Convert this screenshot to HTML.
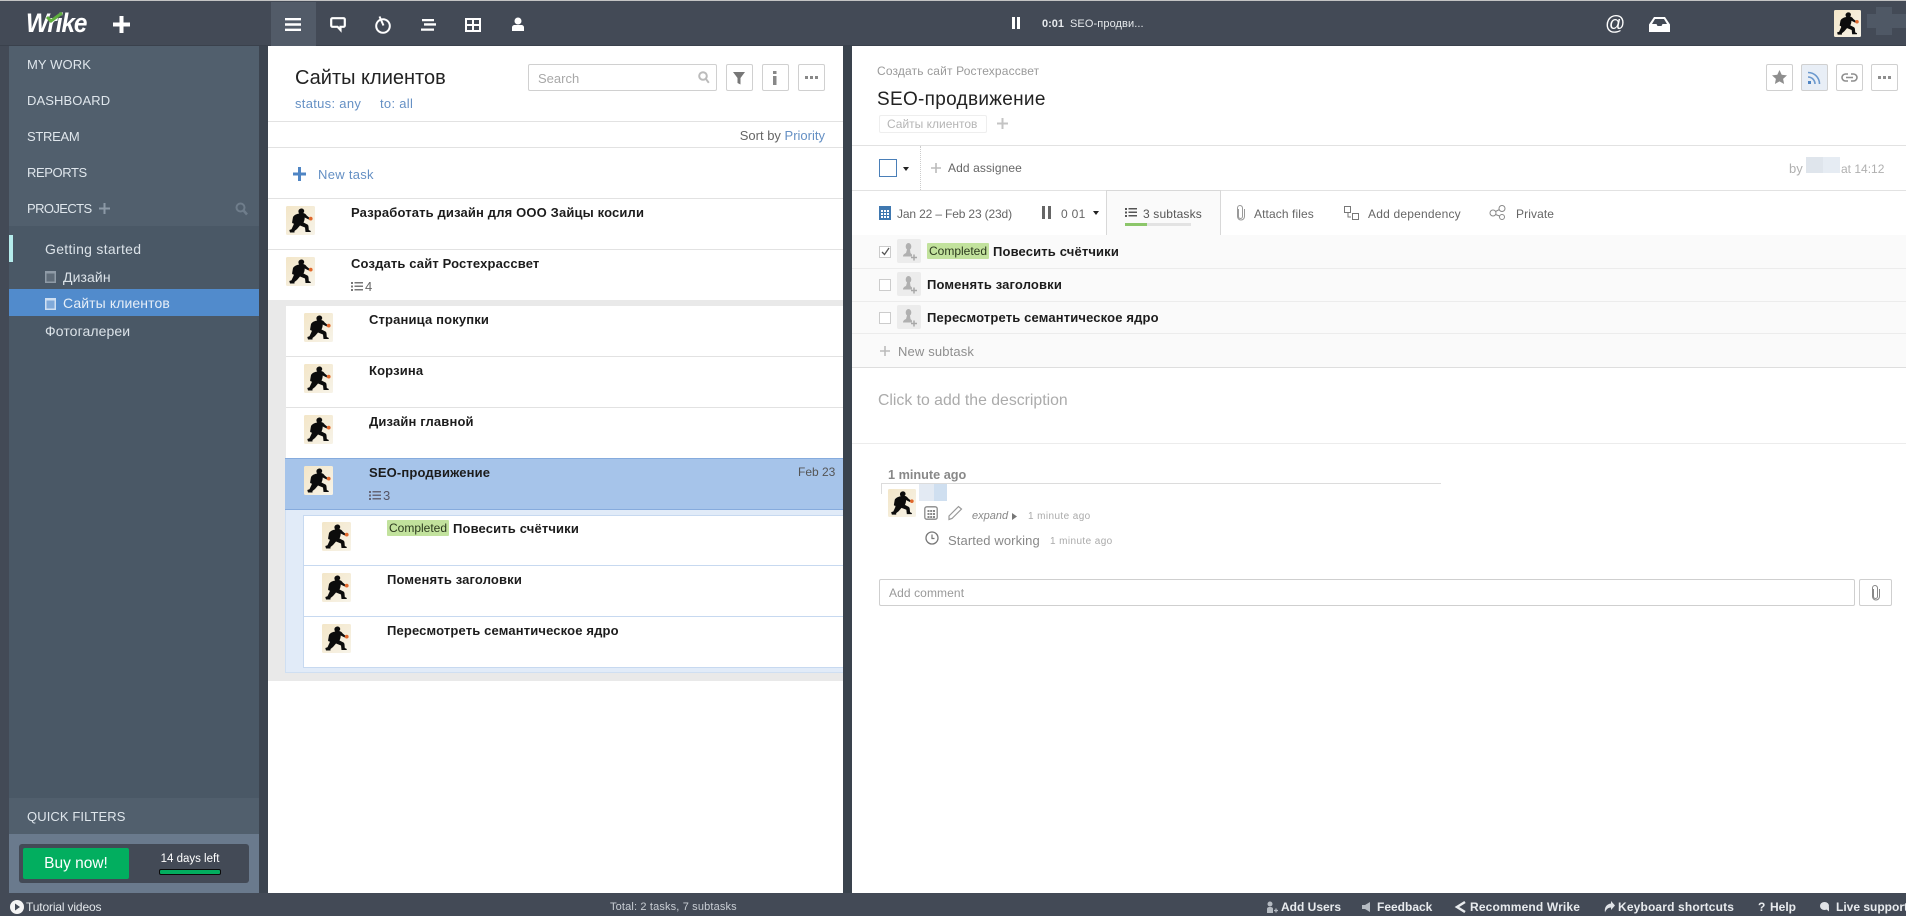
<!DOCTYPE html>
<html><head><meta charset="utf-8"><title>Wrike</title>
<style>
html,body{margin:0;padding:0;width:1906px;height:916px;overflow:hidden;background:#434a56}
*{box-sizing:border-box}
body{font-family:"Liberation Sans","Noto Sans CJK SC",sans-serif;font-size:13px;color:#222;position:relative}
.a{position:absolute}
.t{position:absolute;white-space:nowrap;height:20px;line-height:20px}
.n{color:#dfe6ec;font-size:13px;letter-spacing:.1px}
.s{color:#dbe2e8;font-size:14px;letter-spacing:.1px}
.b{font-weight:bold;font-size:13px;color:#1c1c1c;letter-spacing:.15px}
.l{color:#6590c4}
.g{color:#8a8a8a}
.line{position:absolute;height:1px;background:#e2e2e2}
.btn{position:absolute;top:64px;width:27px;height:27px;border:1px solid #d0d0d0;border-radius:2px;background:#fff}
.bar{position:absolute;left:0;right:0}
.bt{position:absolute;white-space:nowrap;top:897px;height:20px;line-height:20px;font-weight:bold;font-size:12px;color:#e8ebee}
svg{position:absolute;display:block;overflow:visible}
</style></head><body>
<svg width="0" height="0" style="position:absolute"><defs>
<linearGradient id="bg" x1="0" y1="0" x2="1" y2="1"><stop offset="0" stop-color="#f3e6c8"/><stop offset="1" stop-color="#f7f3e8"/></linearGradient>
<symbol id="av" viewBox="0 0 29 29"><rect width="29" height="29" rx="1.500" fill="url(#bg)"/>
<path d="M15.500 2.500c1.500 0 2.700 1.100 2.700 2.500 0 .8-.4 1.500-1 2 1.500.3 2.800 1.200 3.500 2.500l3 2.500-1 1.500-4-2c0 2-.5 3.600-1.200 5l3.500 1.800c1 .5 1.400 1.200 1.500 2.200l.3 3.500 2 1-.2 1H19.500l-.5-4.500-5-2-3 3.500-2.500 2v1.500H4l-.7-2.500 2.200-.7 2.300-5c-.2-.3-.4-.7-.4-1.200-.8.4-1.300.1-1.300-.7l.8-4.800c.3-1.800 3-3.600 6.300-4.100-.5-.5-.8-1.300-.8-2.200C12.400 3.600 14 2.500 15.500 2.500z" fill="#0c0c0c"/>
<circle cx="24.700" cy="12.600" r="1.900" fill="#e0672b"/></symbol>
<symbol id="ph" viewBox="0 0 24 24"><rect width="24" height="24" rx="2" fill="#ececec"/><ellipse cx="11.500" cy="7.500" rx="2.800" ry="3.500" fill="#b0b0b0"/><path d="M10 10.500h3l.5 3.500 1.500 1.500v2H6c0-2 1.500-2.800 3-3.500z" fill="#b0b0b0"/><path d="M17 15.500v6M14 18.500h6" stroke="#a8a8a8" stroke-width="1.500"/></symbol>
<symbol id="li" viewBox="0 0 12 10"><path d="M0 1h2v2H0zM0 4.500h2v2H0zM0 8h2v2H0zM3.500 1H12v1.500H3.500zM3.500 4.500H12V6H3.500zM3.500 8H12v1.500H3.500z" fill="currentColor"/></symbol>
</defs></svg>

<!-- top bar -->
<div class="bar" style="top:0;height:1px;background:#c4c4c4"></div>
<div class="a" style="left:0;top:45px;width:1906px;height:1px;background:#3a414c"></div>

<div class="t" style="left:26px;top:9px;height:28px;line-height:28px;font-size:27px;font-weight:bold;font-style:italic;color:#fff;letter-spacing:-1.200px;transform:scaleX(.9);transform-origin:left">Wrike</div>
<svg style="left:46px;top:11px" width="18" height="12" viewBox="0 0 18 12"><path d="M1 6l4 4 11-8" fill="none" stroke="#5fae3e" stroke-width="3"/></svg>
<svg style="left:113px;top:16px" width="17" height="17"><path d="M6.500 0h4v6.500H17v4h-6.500V17h-4v-6.500H0v-4h6.500z" fill="#fff"/></svg>

<div class="a" style="left:271px;top:2px;width:45px;height:44px;background:#525b68"></div>
<svg style="left:285px;top:17px" width="16" height="15"><path d="M0 1h16v2.400H0zM0 6.300h16v2.400H0zM0 11.600h16V14H0z" fill="#fff"/></svg>
<svg style="left:330px;top:17px" width="16" height="16"><path d="M2.500 1.200h11a1.300 1.300 0 0 1 1.300 1.300v6a1.300 1.300 0 0 1-1.300 1.300H10.500V13L7.500 9.800H2.500a1.300 1.300 0 0 1-1.300-1.300v-6a1.300 1.300 0 0 1 1.300-1.300z" fill="none" stroke="#fff" stroke-width="2.200"/></svg>
<svg style="left:374px;top:15px" width="18" height="19"><circle cx="9" cy="11" r="6.800" fill="none" stroke="#fff" stroke-width="2"/><path d="M5.500 1.500l4 9" stroke="#fff" stroke-width="2"/></svg>
<svg style="left:421px;top:18px" width="15" height="13"><path d="M1 1h12v2.300H1zM3 5.300h12v2.300H3zM0 10.500h13v2.300H0z" fill="#fff"/></svg>
<svg style="left:465px;top:18px" width="16" height="14"><path d="M1 1h14v12H1zM1 7h14M8 1v12" fill="none" stroke="#fff" stroke-width="2"/></svg>
<svg style="left:511px;top:17px" width="14" height="14"><circle cx="7" cy="4" r="3.500" fill="#fff"/><path d="M1 14V10.500c0-1.300 1-2.500 2.500-2.500h7c1.500 0 2.500 1.200 2.500 2.500V14z" fill="#fff"/></svg>
<svg style="left:1012px;top:17px" width="8" height="12"><path d="M0 0h3v12H0zM5 0h3v12H5z" fill="#fff"/></svg>
<div class="t" style="left:1042px;top:14px;font-size:11px;font-weight:bold;color:#e6e9ec">0:01</div>
<div class="t" style="left:1070px;top:14px;font-size:11px;color:#e6e9ec;letter-spacing:.1px">SEO-продви...</div>
<div class="t" style="left:1605px;top:12px;height:24px;line-height:24px;font-size:20px;color:#fff">@</div>
<svg style="left:1649px;top:17px" width="21" height="15"><path d="M5 0h11l5 7.500V15H0V7.500zM6 2L3 7h4.500l1 2h4l1-2H18l-3-5z" fill="#fff" fill-rule="evenodd"/></svg>
<svg style="left:1834px;top:10px" width="27" height="27"><use href="#av"/></svg>
<div class="a" style="left:1867px;top:14px;width:39px;height:14px;background:#4f5865"></div>
<div class="a" style="left:1876px;top:7px;width:16px;height:28px;background:#4f5865"></div>

<!-- sidebar -->
<div class="a" style="left:9px;top:46px;width:250px;height:847px;background:#4a5866"></div>
<div class="a" style="left:9px;top:46px;width:250px;height:180px;background:#515f6d"></div>
<div class="t n" style="left:27px;top:55px">MY WORK</div>
<div class="t n" style="left:27px;top:91px">DASHBOARD</div>
<div class="t n" style="left:27px;top:127px;letter-spacing:-.3px">STREAM</div>
<div class="t n" style="left:27px;top:163px;letter-spacing:-.4px">REPORTS</div>
<div class="t n" style="left:27px;top:199px;letter-spacing:-.6px">PROJECTS</div>
<svg style="left:99px;top:203px" width="11" height="11"><path d="M4.500 0h2v4.500H11v2H6.500V11h-2V6.500H0v-2h4.500z" fill="#8c99a6"/></svg>
<svg style="left:235px;top:202px" width="13" height="14"><circle cx="5.500" cy="5.500" r="4" fill="none" stroke="#6f7d8b" stroke-width="2"/><path d="M8.500 8.500l3.500 4" stroke="#6f7d8b" stroke-width="2.500"/></svg>
<div class="a" style="left:9px;top:235px;width:4px;height:27px;background:#b5ecec"></div>
<div class="t s" style="left:45px;top:239px;letter-spacing:.3px">Getting started</div>
<svg style="left:45px;top:270px" width="11" height="13"><path d="M0 1h11v12H0z" fill="#8f9ba7"/><path d="M1.500 3.500h8v8h-8z" fill="#5f6c79"/></svg>
<div class="t s" style="left:63px;top:267px">Дизайн</div>
<div class="a" style="left:9px;top:289px;width:250px;height:27px;background:#518bcc"></div>
<svg style="left:45px;top:297px" width="11" height="13"><path d="M0 1h11v12H0z" fill="#cfe0f2"/><path d="M1.500 3.500h8v8h-8z" fill="#7fa9d9"/></svg>
<div class="t s" style="left:63px;top:293px;color:#e6eef7">Сайты клиентов</div>
<div class="t s" style="left:45px;top:321px">Фотогалереи</div>
<div class="a" style="left:9px;top:798px;width:250px;height:36px;background:#515f6d"></div>
<div class="t n" style="left:27px;top:807px">QUICK FILTERS</div>
<div class="a" style="left:9px;top:834px;width:250px;height:59px;background:#6a7a8d"></div>
<div class="a" style="left:19px;top:844px;width:230px;height:39px;background:#434a56;border-radius:3px"></div>
<div class="a" style="left:23px;top:848px;width:106px;height:31px;background:#02ae5f;border-radius:2px;color:#fff;font-size:15.500px;text-align:center;line-height:31px">Buy now!</div>
<div class="t" style="left:140px;width:100px;top:849px;text-align:center;color:#fff;font-size:11.500px">14 days left</div>
<div class="a" style="left:159px;top:869px;width:62px;height:6px;background:#02ae5f;border:1px solid #0a0a0a;border-radius:2px"></div>

<!-- gutters -->
<div class="a" style="left:259px;top:46px;width:9px;height:847px;background:#3c444f"></div>
<div class="a" style="left:843px;top:46px;width:9px;height:847px;background:#3a434d"></div>

<!-- list panel -->
<div class="a" style="left:268px;top:46px;width:575px;height:847px;background:#fff"></div>
<div class="t" style="left:295px;top:66px;height:24px;line-height:24px;font-size:20px;color:#222">Сайты клиентов</div>
<div class="t l" style="left:295px;top:94px;font-size:13px;letter-spacing:.3px">status: any</div>
<div class="t l" style="left:380px;top:94px;font-size:13px;letter-spacing:.3px">to: all</div>
<div class="a" style="left:528px;top:64px;width:189px;height:27px;border:1px solid #d0d0d0;border-radius:2px;background:#fff"></div>
<div class="t" style="left:538px;top:69px;color:#a8a8a8;font-size:13px">Search</div>
<svg style="left:698px;top:71px" width="12" height="13"><circle cx="5" cy="5" r="3.800" fill="none" stroke="#bbb" stroke-width="2"/><path d="M7.800 7.800l3 4" stroke="#bbb" stroke-width="2"/></svg>
<div class="btn" style="left:726px"></div>
<svg style="left:733px;top:72px" width="13" height="13"><path d="M0 0h12L7.500 6v6.500l-3-1.500V6z" fill="#777"/></svg>
<div class="btn" style="left:762px"></div>
<svg style="left:773px;top:71px" width="4" height="14"><path d="M0 0h3.500v3H0zM0 5h3.500v9H0z" fill="#888"/></svg>
<div class="btn" style="left:798px"></div>
<svg style="left:805px;top:76px" width="13" height="3"><path d="M0 0h3v3H0zM5 0h3v3H5zM10 0h3v3h-3z" fill="#888"/></svg>
<div class="line" style="left:268px;top:121px;width:575px"></div>
<div class="t" style="right:1081px;top:126px;font-size:13px;color:#666">Sort by <span class="l">Priority</span></div>
<div class="line" style="left:268px;top:147px;width:575px"></div>
<svg style="left:293px;top:167px" width="13" height="14"><path d="M5 0h3v5.500h5v3H8V14H5V8.500H0v-3h5z" fill="#4f85c4"/></svg>
<div class="t l" style="left:318px;top:165px;font-size:13px;letter-spacing:.3px">New task</div>
<div class="line" style="left:268px;top:198px;width:575px"></div>
<svg style="left:286px;top:206px" width="29" height="29"><use href="#av"/></svg>
<div class="t b" style="left:351px;top:203px">Разработать дизайн для ООО Зайцы косили</div>
<div class="line" style="left:268px;top:249px;width:575px"></div>
<svg style="left:286px;top:257px" width="29" height="29"><use href="#av"/></svg>
<div class="t b" style="left:351px;top:254px">Создать сайт Ростехрассвет</div>
<svg style="left:351px;top:281px;color:#777" width="12" height="10"><use href="#li"/></svg>
<div class="t" style="left:365px;top:277px;color:#666;font-size:13px">4</div>

<div class="a" style="left:268px;top:300px;width:575px;height:381px;background:#e9e9e9"></div>
<div class="a" style="left:286px;top:306px;width:557px;height:152px;background:#fff"></div>
<div class="line" style="left:286px;top:356px;width:557px"></div>
<div class="line" style="left:286px;top:407px;width:557px"></div>
<svg style="left:304px;top:313px" width="29" height="29"><use href="#av"/></svg>
<div class="t b" style="left:369px;top:310px">Страница покупки</div>
<svg style="left:304px;top:364px" width="29" height="29"><use href="#av"/></svg>
<div class="t b" style="left:369px;top:361px">Корзина</div>
<svg style="left:304px;top:415px" width="29" height="29"><use href="#av"/></svg>
<div class="t b" style="left:369px;top:412px">Дизайн главной</div>

<div class="a" style="left:285px;top:458px;width:558px;height:52px;background:#a6c4ea;border-top:1px solid #86abdd;border-bottom:1px solid #86abdd"></div>
<svg style="left:304px;top:466px" width="29" height="29"><use href="#av"/></svg>
<div class="t b" style="left:369px;top:463px">SEO-продвижение</div>
<svg style="left:369px;top:490px;color:#667" width="12" height="10"><use href="#li"/></svg>
<div class="t" style="left:383px;top:486px;color:#556;font-size:13px">3</div>
<div class="t" style="left:798px;top:462px;color:#555;font-size:12px">Feb 23</div>

<div class="a" style="left:285px;top:510px;width:558px;height:163px;background:#e1ebf8;border-left:1px solid #cfdff2;border-bottom:1px solid #cfdff2"></div>
<div class="a" style="left:303px;top:515px;width:540px;height:153px;background:#fff;border:1px solid #c7d9f0;border-right:0"></div>
<div class="a" style="left:303px;top:565px;width:540px;height:1px;background:#c7d9f0"></div>
<div class="a" style="left:303px;top:616px;width:540px;height:1px;background:#c7d9f0"></div>
<svg style="left:322px;top:522px" width="29" height="29"><use href="#av"/></svg>
<svg style="left:322px;top:573px" width="29" height="29"><use href="#av"/></svg>
<svg style="left:322px;top:624px" width="29" height="29"><use href="#av"/></svg>
<div class="a" style="left:387px;top:520px;width:62px;height:16px;background:#c2e29d;border-radius:1px;font-size:12px;line-height:16px;text-align:center;color:#2c3a1e">Completed</div>
<div class="t b" style="left:453px;top:519px">Повесить счётчики</div>
<div class="t b" style="left:387px;top:570px">Поменять заголовки</div>
<div class="t b" style="left:387px;top:621px">Пересмотреть семантическое ядро</div>

<!-- detail panel -->
<div class="a" style="left:852px;top:46px;width:1054px;height:847px;background:#fff"></div>
<div class="t" style="left:877px;top:61px;color:#9a9a9a;font-size:12px;letter-spacing:.15px">Создать сайт Ростехрассвет</div>
<div class="t" style="left:877px;top:88px;height:24px;line-height:24px;font-size:19px;color:#222;letter-spacing:.3px">SEO-продвижение</div>
<div class="a" style="left:879px;top:115px;width:108px;height:18px;border:1px solid #eee;border-radius:2px;color:#b5b5b5;font-size:12px;line-height:17px;padding-left:7px">Сайты клиентов</div>
<svg style="left:997px;top:118px" width="11" height="11"><path d="M4.500 0h2v4.500H11v2H6.500V11h-2V6.500H0v-2h4.500z" fill="#c4c4c4"/></svg>
<div class="btn" style="left:1766px"></div>
<svg style="left:1772px;top:70px" width="15" height="14"><path d="M7.500 0l2.200 4.800 5.300.6-3.900 3.500 1 5.100-4.600-2.600L2.900 14l1-5.100L0 5.400l5.300-.6z" fill="#8e8e8e"/></svg>
<div class="btn" style="left:1801px;background:#e8eef6"></div>
<svg style="left:1808px;top:71px" width="13" height="13"><rect x="0" y="10" width="3" height="3" fill="#4f85c4"/><path d="M0 6a7 7 0 0 1 7 7M0 1.500A11.500 11.500 0 0 1 11.500 13" fill="none" stroke="#6a98cd" stroke-width="1.600"/></svg>
<div class="btn" style="left:1836px"></div>
<svg style="left:1842px;top:73px" width="15" height="9"><path d="M6 1H3.500a3.500 3.500 0 0 0 0 7H6M9 1h2.500a3.500 3.500 0 0 1 0 7H9M4 4.500h7" fill="none" stroke="#8e8e8e" stroke-width="1.600"/></svg>
<div class="btn" style="left:1871px"></div>
<svg style="left:1878px;top:76px" width="13" height="3"><path d="M0 0h3v3H0zM5 0h3v3H5zM10 0h3v3h-3z" fill="#8e8e8e"/></svg>

<div class="line" style="left:852px;top:145px;width:1054px"></div>
<div class="a" style="left:879px;top:159px;width:18px;height:18px;border:1px solid #4a7fb8"></div>
<svg style="left:903px;top:167px" width="6" height="4"><path d="M0 0h6L3 4z" fill="#222"/></svg>
<div class="a" style="left:920px;top:146px;height:44px;width:0;border-left:1px dotted #ccc"></div>
<svg style="left:931px;top:163px" width="10" height="10"><path d="M4.200 0h1.600v4.200H10v1.600H5.800V10H4.200V5.800H0V4.200h4.200z" fill="#bbb"/></svg>
<div class="t" style="left:948px;top:158px;color:#666;font-size:12px;letter-spacing:.1px">Add assignee</div>
<div class="t" style="left:1789px;top:159px;color:#b0b0b0;font-size:13px">by</div>
<div class="a" style="left:1806px;top:157px;width:17px;height:16px;background:#dfe5ec"></div>
<div class="a" style="left:1823px;top:157px;width:17px;height:16px;background:#e6ecf3"></div>
<div class="t" style="left:1841px;top:159px;color:#b0b0b0;font-size:12px">at 14:12</div>
<div class="line" style="left:852px;top:190px;width:1054px"></div>

<svg style="left:879px;top:205px" width="12" height="15"><path d="M0 1h12v14H0z" fill="#3f78b0"/><path d="M2 5h2v2H2zM5 5h2v2H5zM8 5h2v2H8zM2 8h2v2H2zM5 8h2v2H5zM8 8h2v2H8zM2 11h2v2H2zM5 11h2v2H5zM8 11h2v2H8z" fill="#fff"/></svg>
<div class="t" style="left:897px;top:204px;color:#666;font-size:12px;letter-spacing:-.15px">Jan 22 – Feb 23 (23d)</div>
<svg style="left:1042px;top:206px" width="9" height="13"><path d="M0 0h3v13H0zM6 0h3v13H6z" fill="#666"/></svg>
<div class="t" style="left:1061px;top:204px;color:#666;font-size:12px;letter-spacing:.3px">0 01</div>
<svg style="left:1093px;top:211px" width="6" height="4"><path d="M0 0h6L3 4z" fill="#222"/></svg>
<div class="a" style="left:1106px;top:190px;width:115px;height:46px;background:#fafafa;border-left:1px solid #d8d8d8;border-right:1px solid #d8d8d8;border-top:1px solid #d8d8d8"></div>
<svg style="left:1125px;top:207px;color:#555" width="12" height="10"><use href="#li"/></svg>
<div class="t" style="left:1143px;top:204px;color:#555;font-size:12px;letter-spacing:.15px">3 subtasks</div>
<div class="a" style="left:1125px;top:223px;width:66px;height:3px;background:#e3e3e3"></div>
<div class="a" style="left:1125px;top:223px;width:22px;height:3px;background:#8cc66a"></div>
<svg style="left:1236px;top:205px" width="9" height="15"><path d="M2.500 4v7.500a2 2 0 0 0 4 0V3a2.500 2.500 0 0 0-5 0v8.500a3.500 3.500 0 0 0 7 0V4" fill="none" stroke="#999" stroke-width="1"/></svg>
<div class="t" style="left:1254px;top:204px;color:#666;font-size:12px;letter-spacing:.1px">Attach files</div>
<svg style="left:1344px;top:206px" width="15" height="14"><path d="M.5.500h6v6h-6zM8.500 7.500h6v6h-6zM4 7v4h3" fill="none" stroke="#777"/></svg>
<div class="t" style="left:1368px;top:204px;color:#666;font-size:12px;letter-spacing:.2px">Add dependency</div>
<svg style="left:1489px;top:205px" width="17" height="15"><circle cx="4" cy="8" r="3" fill="none" stroke="#888"/><circle cx="13" cy="3.500" r="3" fill="none" stroke="#888"/><circle cx="13" cy="12" r="2.500" fill="none" stroke="#888"/><path d="M6.500 6.500l4-2M6.500 9.500l4 1.500" stroke="#888"/></svg>
<div class="t" style="left:1516px;top:204px;color:#666;font-size:12px;letter-spacing:.1px">Private</div>

<div class="a" style="left:852px;top:235px;width:1054px;height:132px;background:#fafafa"></div>
<div class="a" style="left:1107px;top:234px;width:113px;height:2px;background:#fafafa"></div>
<div class="line" style="left:852px;top:268px;width:1054px;background:#ececec"></div>
<div class="line" style="left:852px;top:301px;width:1054px;background:#ececec"></div>
<div class="line" style="left:852px;top:333px;width:1054px;background:#ececec"></div>
<div class="line" style="left:852px;top:367px;width:1054px;background:#dedede"></div>
<div class="a" style="left:879px;top:246px;width:12px;height:12px;border:1px solid #ccc;background:#fff"></div>
<svg style="left:881px;top:247px" width="9" height="9"><path d="M1 5l2.500 2.500L8 1" fill="none" stroke="#555" stroke-width="1.300"/></svg>
<div class="a" style="left:879px;top:279px;width:12px;height:12px;border:1px solid #ccc;background:#fff"></div>
<div class="a" style="left:879px;top:312px;width:12px;height:12px;border:1px solid #ccc;background:#fff"></div>
<svg style="left:897px;top:239px" width="24" height="24"><use href="#ph"/></svg>
<svg style="left:897px;top:272px" width="24" height="24"><use href="#ph"/></svg>
<svg style="left:897px;top:305px" width="24" height="24"><use href="#ph"/></svg>
<div class="a" style="left:927px;top:243px;width:62px;height:16px;background:#c2e29d;border-radius:1px;font-size:12px;line-height:16px;text-align:center;color:#2c3a1e">Completed</div>
<div class="t b" style="left:993px;top:242px">Повесить счётчики</div>
<div class="t b" style="left:927px;top:275px">Поменять заголовки</div>
<div class="t b" style="left:927px;top:308px">Пересмотреть семантическое ядро</div>
<svg style="left:880px;top:346px" width="10" height="10"><path d="M4.200 0h1.600v4.200H10v1.600H5.800V10H4.200V5.800H0V4.200h4.200z" fill="#bbb"/></svg>
<div class="t" style="left:898px;top:342px;color:#8e8e8e;font-size:13px;letter-spacing:.15px">New subtask</div>

<div class="t" style="left:878px;top:391px;color:#ababab;font-size:15.800px">Click to add the description</div>
<div class="line" style="left:852px;top:443px;width:1054px;background:#ececec"></div>
<div class="t" style="left:888px;top:465px;color:#888;font-size:12.700px;font-weight:bold">1 minute ago</div>
<div class="line" style="left:881px;top:483px;width:560px;background:#dcdcdc"></div>
<div class="a" style="left:881px;top:483px;width:1px;height:11px;background:#dcdcdc"></div>
<svg style="left:888px;top:489px" width="28" height="28"><use href="#av"/></svg>
<div class="a" style="left:919px;top:484px;width:15px;height:17px;background:#e3eaf3"></div>
<div class="a" style="left:934px;top:484px;width:13px;height:17px;background:#cfdff0"></div>
<svg style="left:924px;top:505px" width="14" height="15"><rect x=".8" y="1.800" width="12.400" height="12.400" rx="2" fill="none" stroke="#888" stroke-width="1.300"/><path d="M3.500 5h2v2h-2zM6.200 5h2v2h-2zM9 5h2v2H9zM3.500 8h2v2h-2zM6.200 8h2v2h-2zM9 8h2v2H9zM3.500 11h2v2h-2zM6.200 11h2v2h-2zM9 11h2v2H9z" fill="#888"/></svg>
<svg style="left:948px;top:505px" width="15" height="15"><path d="M1 11L10.500 1.500l3 2.500L4 13.500 1 14.500z" fill="none" stroke="#999" stroke-width="1.200"/></svg>
<div class="t" style="left:972px;top:506px;font-size:11px;font-style:italic;color:#888">expand</div>
<svg style="left:1012px;top:513px" width="5" height="7"><path d="M0 0l5 3.500L0 7z" fill="#777"/></svg>
<div class="t" style="left:1028px;top:507px;font-size:10px;color:#aaa;letter-spacing:.4px">1 minute ago</div>
<svg style="left:925px;top:531px" width="14" height="14"><circle cx="7" cy="7" r="6" fill="none" stroke="#777" stroke-width="1.300"/><path d="M7 3.500V7.500H9.500" fill="none" stroke="#777" stroke-width="1.200"/></svg>
<div class="t" style="left:948px;top:531px;font-size:13px;color:#888;letter-spacing:.1px">Started working</div>
<div class="t" style="left:1050px;top:532px;font-size:10px;color:#aaa;letter-spacing:.4px">1 minute ago</div>
<div class="a" style="left:879px;top:579px;width:976px;height:27px;border:1px solid #cfcfcf;border-radius:2px;background:#fff"></div>
<div class="t" style="left:889px;top:583px;color:#999;font-size:12px;letter-spacing:.1px">Add comment</div>
<div class="a" style="left:1859px;top:579px;width:33px;height:27px;border:1px solid #cfcfcf;border-radius:2px;background:#fff"></div>
<svg style="left:1871px;top:585px" width="9" height="15"><path d="M2.500 4v7.500a2 2 0 0 0 4 0V3a2.500 2.500 0 0 0-5 0v8.500a3.500 3.500 0 0 0 7 0V4" fill="none" stroke="#888" stroke-width="1"/></svg>

<!-- footer -->
<svg style="left:10px;top:900px" width="14" height="14"><circle cx="7" cy="7" r="7" fill="#f4f4f4"/><path d="M5 3.500l5 3.500-5 3.500z" fill="#434a56"/></svg>
<div class="t" style="left:26px;top:897px;color:#e2e6ea;font-size:12px;letter-spacing:-.15px">Tutorial videos</div>
<div class="t" style="left:610px;top:897px;color:#c9ced4;font-size:11px;letter-spacing:.15px">Total: 2 tasks, 7 subtasks</div>
<svg style="left:1265px;top:901px" width="14" height="12"><circle cx="5" cy="3" r="2.500" fill="#b5bbc2"/><path d="M2 12V8c0-1.500 1-2 3-2s3 .5 3 2v4z" fill="#b5bbc2"/><path d="M11 7.500v4M9 9.500h4" stroke="#b5bbc2" stroke-width="1.300"/></svg>
<div class="bt" style="left:1281px">Add Users</div>
<svg style="left:1361px;top:902px" width="10" height="10"><path d="M9 0v10L4 7H1V3h3z" fill="#b5bbc2"/></svg>
<div class="bt" style="left:1377px">Feedback</div>
<svg style="left:1454px;top:901px" width="12" height="12"><path d="M11 1L3 6l8 5" fill="none" stroke="#e8ebee" stroke-width="2.500"/></svg>
<div class="bt" style="left:1470px;letter-spacing:.15px">Recommend Wrike</div>
<svg style="left:1604px;top:901px" width="11" height="12"><path d="M7 0l4 4.500L7 9V6.500C4 6.500 2 8.500 1 11.500 0 6 3 3 7 2.500z" fill="#e0e3e7"/></svg>
<div class="bt" style="left:1618px;letter-spacing:.15px">Keyboard shortcuts</div>
<div class="bt" style="left:1758px">?</div>
<div class="bt" style="left:1770px">Help</div>
<svg style="left:1820px;top:902px" width="10" height="10"><ellipse cx="4.500" cy="4" rx="4.500" ry="4" fill="#e0e3e7"/><path d="M6 7l3 2.500V5z" fill="#e0e3e7"/></svg>
<div class="bt" style="left:1836px">Live support</div>
</body></html>
